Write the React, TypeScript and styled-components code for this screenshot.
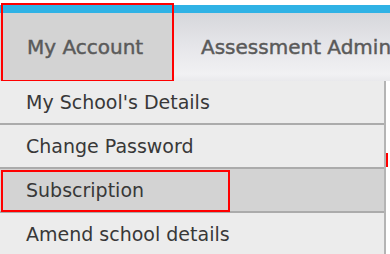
import React from 'react';
import styled, { createGlobalStyle, css } from 'styled-components';

const GlobalStyle = createGlobalStyle`
  html, body {
    margin: 0;
    padding: 0;
    background: #ffffff;
  }
  body {
    font-family: "DejaVu Sans", Verdana, sans-serif;
    overflow: hidden;
  }
`;

const Page = styled.div`
  width: 390px;
  height: 254px;
  overflow: hidden;
  padding-top: 5px;
  box-sizing: border-box;
`;

const BlueBar = styled.div`
  height: 8px;
  background: #2fb2e5;
`;

const NavBar = styled.nav`
  display: flex;
  height: 68px;
  background: linear-gradient(to bottom, #d6d7db 0%, #e6e6ea 50%, #f1f1f3 90%, #e9e9ec 100%);
  white-space: nowrap;
`;

// red annotation frame drawn over a part of the screenshot
const redFrame = (top: number, right: number, bottom: number, left: number) => css`
  &::after {
    content: '';
    position: absolute;
    top: ${top}px;
    right: ${right}px;
    bottom: ${bottom}px;
    left: ${left}px;
    border: 2px solid #ff0000;
    pointer-events: none;
  }
`;

const NavTab = styled.div<{ $active?: boolean }>`
  position: relative;
  display: flex;
  align-items: center;
  flex: ${p => (p.$active ? '0 0 172px' : '1 0 auto')};
  box-sizing: border-box;
  padding-left: ${p => (p.$active ? '27px' : '29px')};
  padding-bottom: 1px;
  background: ${p => (p.$active ? '#d3d3d3' : 'transparent')};
  color: #5a5a5a;
  font-size: 20px;
  -webkit-text-stroke: 0.45px #5a5a5a;
  ${p => p.$active && redFrame(-10, -2, -1, 1)}
`;

const Menu = styled.ul`
  position: relative;
  list-style: none;
  margin: 0;
  padding: 0;
  width: 386px;
  box-sizing: border-box;
  border-right: 2px solid #b4b4b4;
  background: #ececec;

  &::after {
    content: '';
    position: absolute;
    right: -4px;
    top: 72px;
    width: 2px;
    height: 14px;
    background: #ff0000;
  }
`;

const MenuItem = styled.li<{ $selected?: boolean }>`
  position: relative;
  display: flex;
  align-items: center;
  height: 42px;
  padding-left: 26px;
  border-bottom: 2px solid #ababab;
  background: ${p => (p.$selected ? '#d3d3d3' : '#ececec')};
  color: #383838;
  font-size: 19px;
  &:last-child {
    border-bottom: none;
  }
  ${p => p.$selected && redFrame(1, 154, -1, 1)}
`;

const items = [
  { label: "My School's Details" },
  { label: 'Change Password' },
  { label: 'Subscription', selected: true },
  { label: 'Amend school details' },
];

export default function App() {
  return (
    <>
      <GlobalStyle />
      <Page>
        <BlueBar />
        <NavBar>
          <NavTab $active>My Account</NavTab>
          <NavTab>Assessment Administration</NavTab>
        </NavBar>
        <Menu>
          {items.map(item => (
            <MenuItem key={item.label} $selected={item.selected}>
              {item.label}
            </MenuItem>
          ))}
        </Menu>
      </Page>
    </>
  );
}
